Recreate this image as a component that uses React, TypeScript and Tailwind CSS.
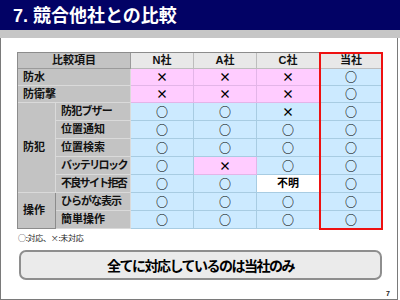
import React from "react";

type Cell = { t: string; c: "p" | "b" | "w" };

const O: Cell = { t: "○", c: "b" };
const XP: Cell = { t: "×", c: "p" };
const XB: Cell = { t: "×", c: "b" };

const bgFor = (c: Cell["c"]) =>
  c === "p"
    ? "bg-[#ffccff] border-[#e3b5e8]"
    : c === "b"
    ? "bg-[#cceaff] border-[#a8cce2]"
    : "bg-white border-[#a8cce2]";

function Val({ cell }: { cell: Cell }) {
  return (
    <div
      className={`flex items-center justify-center border-r border-b ${bgFor(cell.c)} ${
        cell.t === "○"
          ? "text-[12px] font-bold font-['Noto_Sans_CJK_JP',sans-serif]"
          : cell.t === "×"
          ? "text-[12px] font-bold font-['Noto_Sans_CJK_JP',sans-serif]"
          : "text-[11px] font-bold"
      } text-black leading-none`}
    >
      {cell.t}
    </div>
  );
}

function Gray({ children, span2 = false, tr = "" }: { children: React.ReactNode; span2?: boolean; tr?: string }) {
  return (
    <div
      className={`flex items-center justify-start pl-[5px] whitespace-nowrap overflow-hidden ${tr} ${
        span2 ? "col-span-2" : ""
      } bg-[#c3c3c3] border-r border-b border-[#dadada] text-[11px] font-bold text-[#111] leading-none`}
    >
      {children}
    </div>
  );
}

export default function App() {
  const rowsTop: { name: string; v: Cell[] }[] = [
    { name: "防水", v: [XP, XP, XP, O] },
    { name: "防衛撃", v: [XP, XP, XP, O] },
  ];
  const crime: { name: string; tr: string; v: Cell[] }[] = [
    { name: "防犯ブザー", tr: "tracking-[-0.8px]", v: [O, O, XB, O] },
    { name: "位置通知", tr: "", v: [O, O, O, O] },
    { name: "位置検索", tr: "", v: [O, O, O, O] },
    { name: "バッテリロック", tr: "tracking-[-1.6px]", v: [O, XP, O, O] },
    { name: "不良サイト拒否", tr: "tracking-[-1.7px]", v: [O, O, { t: "不明", c: "w" }, O] },
  ];
  const ops: { name: string; tr: string; v: Cell[] }[] = [
    { name: "ひらがな表示", tr: "tracking-[-1px]", v: [O, O, O, O] },
    { name: "簡単操作", tr: "", v: [O, O, O, O] },
  ];

  return (
    <div className="w-[400px] h-[300px] bg-white flex flex-col overflow-hidden font-['Liberation_Sans','Noto_Sans_CJK_JP',sans-serif]">
      <div className="h-[30px] shrink-0 bg-[#020265] flex items-center pl-[13px] pt-[2px] text-white text-[18px] font-bold leading-none">
        7. 競合他社との比較
      </div>
      <div className="h-[8px] shrink-0 bg-[#c6c6c6]" />
      <div className="w-[398px] flex-1 border-l border-r border-b border-[#7a7a7a] flex flex-col pl-[16px] pt-[14px]">
        <div className="relative grid grid-cols-[38px_75px_63px_63px_63px_63px] grid-rows-[16px_17px_17px_repeat(7,18px)] border-t border-l border-[#8c8c8c] w-[365px]">
          <div className="col-span-2 flex items-center justify-center bg-[#c3c3c3] border-r border-b border-[#9a9a9a] text-[11px] font-bold text-[#111] leading-none">
            比較項目
          </div>
          {["N社", "A社", "C社", "当社"].map((h) => (
            <div
              key={h}
              className="flex items-center justify-center bg-[#e8e8e8] border-r border-b border-[#bdbdbd] text-[11px] font-bold text-[#111] leading-none"
            >
              {h}
            </div>
          ))}

          {rowsTop.map((r) => (
            <React.Fragment key={r.name}>
              <Gray span2>{r.name}</Gray>
              {r.v.map((c, i) => (
                <Val key={i} cell={c} />
              ))}
            </React.Fragment>
          ))}

          <div className="row-span-5 flex items-center justify-start pl-[5px] bg-[#c3c3c3] border-r border-b border-[#dadada] text-[11px] font-bold text-[#111] leading-none">
            防犯
          </div>
          {crime.map((r) => (
            <React.Fragment key={r.name}>
              <Gray tr={r.tr}>{r.name}</Gray>
              {r.v.map((c, i) => (
                <Val key={i} cell={c} />
              ))}
            </React.Fragment>
          ))}

          <div className="row-span-2 flex items-center justify-start pl-[5px] bg-[#c3c3c3] border-r border-b border-[#8c8c8c] text-[11px] font-bold text-[#111] leading-none">
            操作
          </div>
          {ops.map((r) => (
            <React.Fragment key={r.name}>
              <Gray tr={r.tr}>{r.name}</Gray>
              {r.v.map((c, i) => (
                <Val key={i} cell={c} />
              ))}
            </React.Fragment>
          ))}

          <div className="absolute col-start-6 row-start-1 row-span-10 -top-px -left-px -right-px -bottom-px border-2 border-[#ee1111] pointer-events-none" />
        </div>

        <div className="mt-[4px] text-[8px] leading-[10px] text-[#222] pl-[1px] tracking-[-0.3px] font-['Noto_Sans_CJK_JP',sans-serif]">
          ○:対応、×:未対応
        </div>

        <div className="mt-[7px] ml-[2px] w-[363px] h-[30px] rounded-[7px] border-2 border-[#8e8e8e] bg-[#ebebeb] flex items-center justify-center text-[14px] tracking-[-1.5px] font-bold text-black leading-none font-['Noto_Sans_CJK_JP',sans-serif]">
          全てに対応しているのは当社のみ
        </div>

        <div className="flex-1 flex items-end justify-end pr-[7px] pb-[1px] text-[7px] leading-[8px] font-bold text-[#222]">
          7
        </div>
      </div>
    </div>
  );
}
